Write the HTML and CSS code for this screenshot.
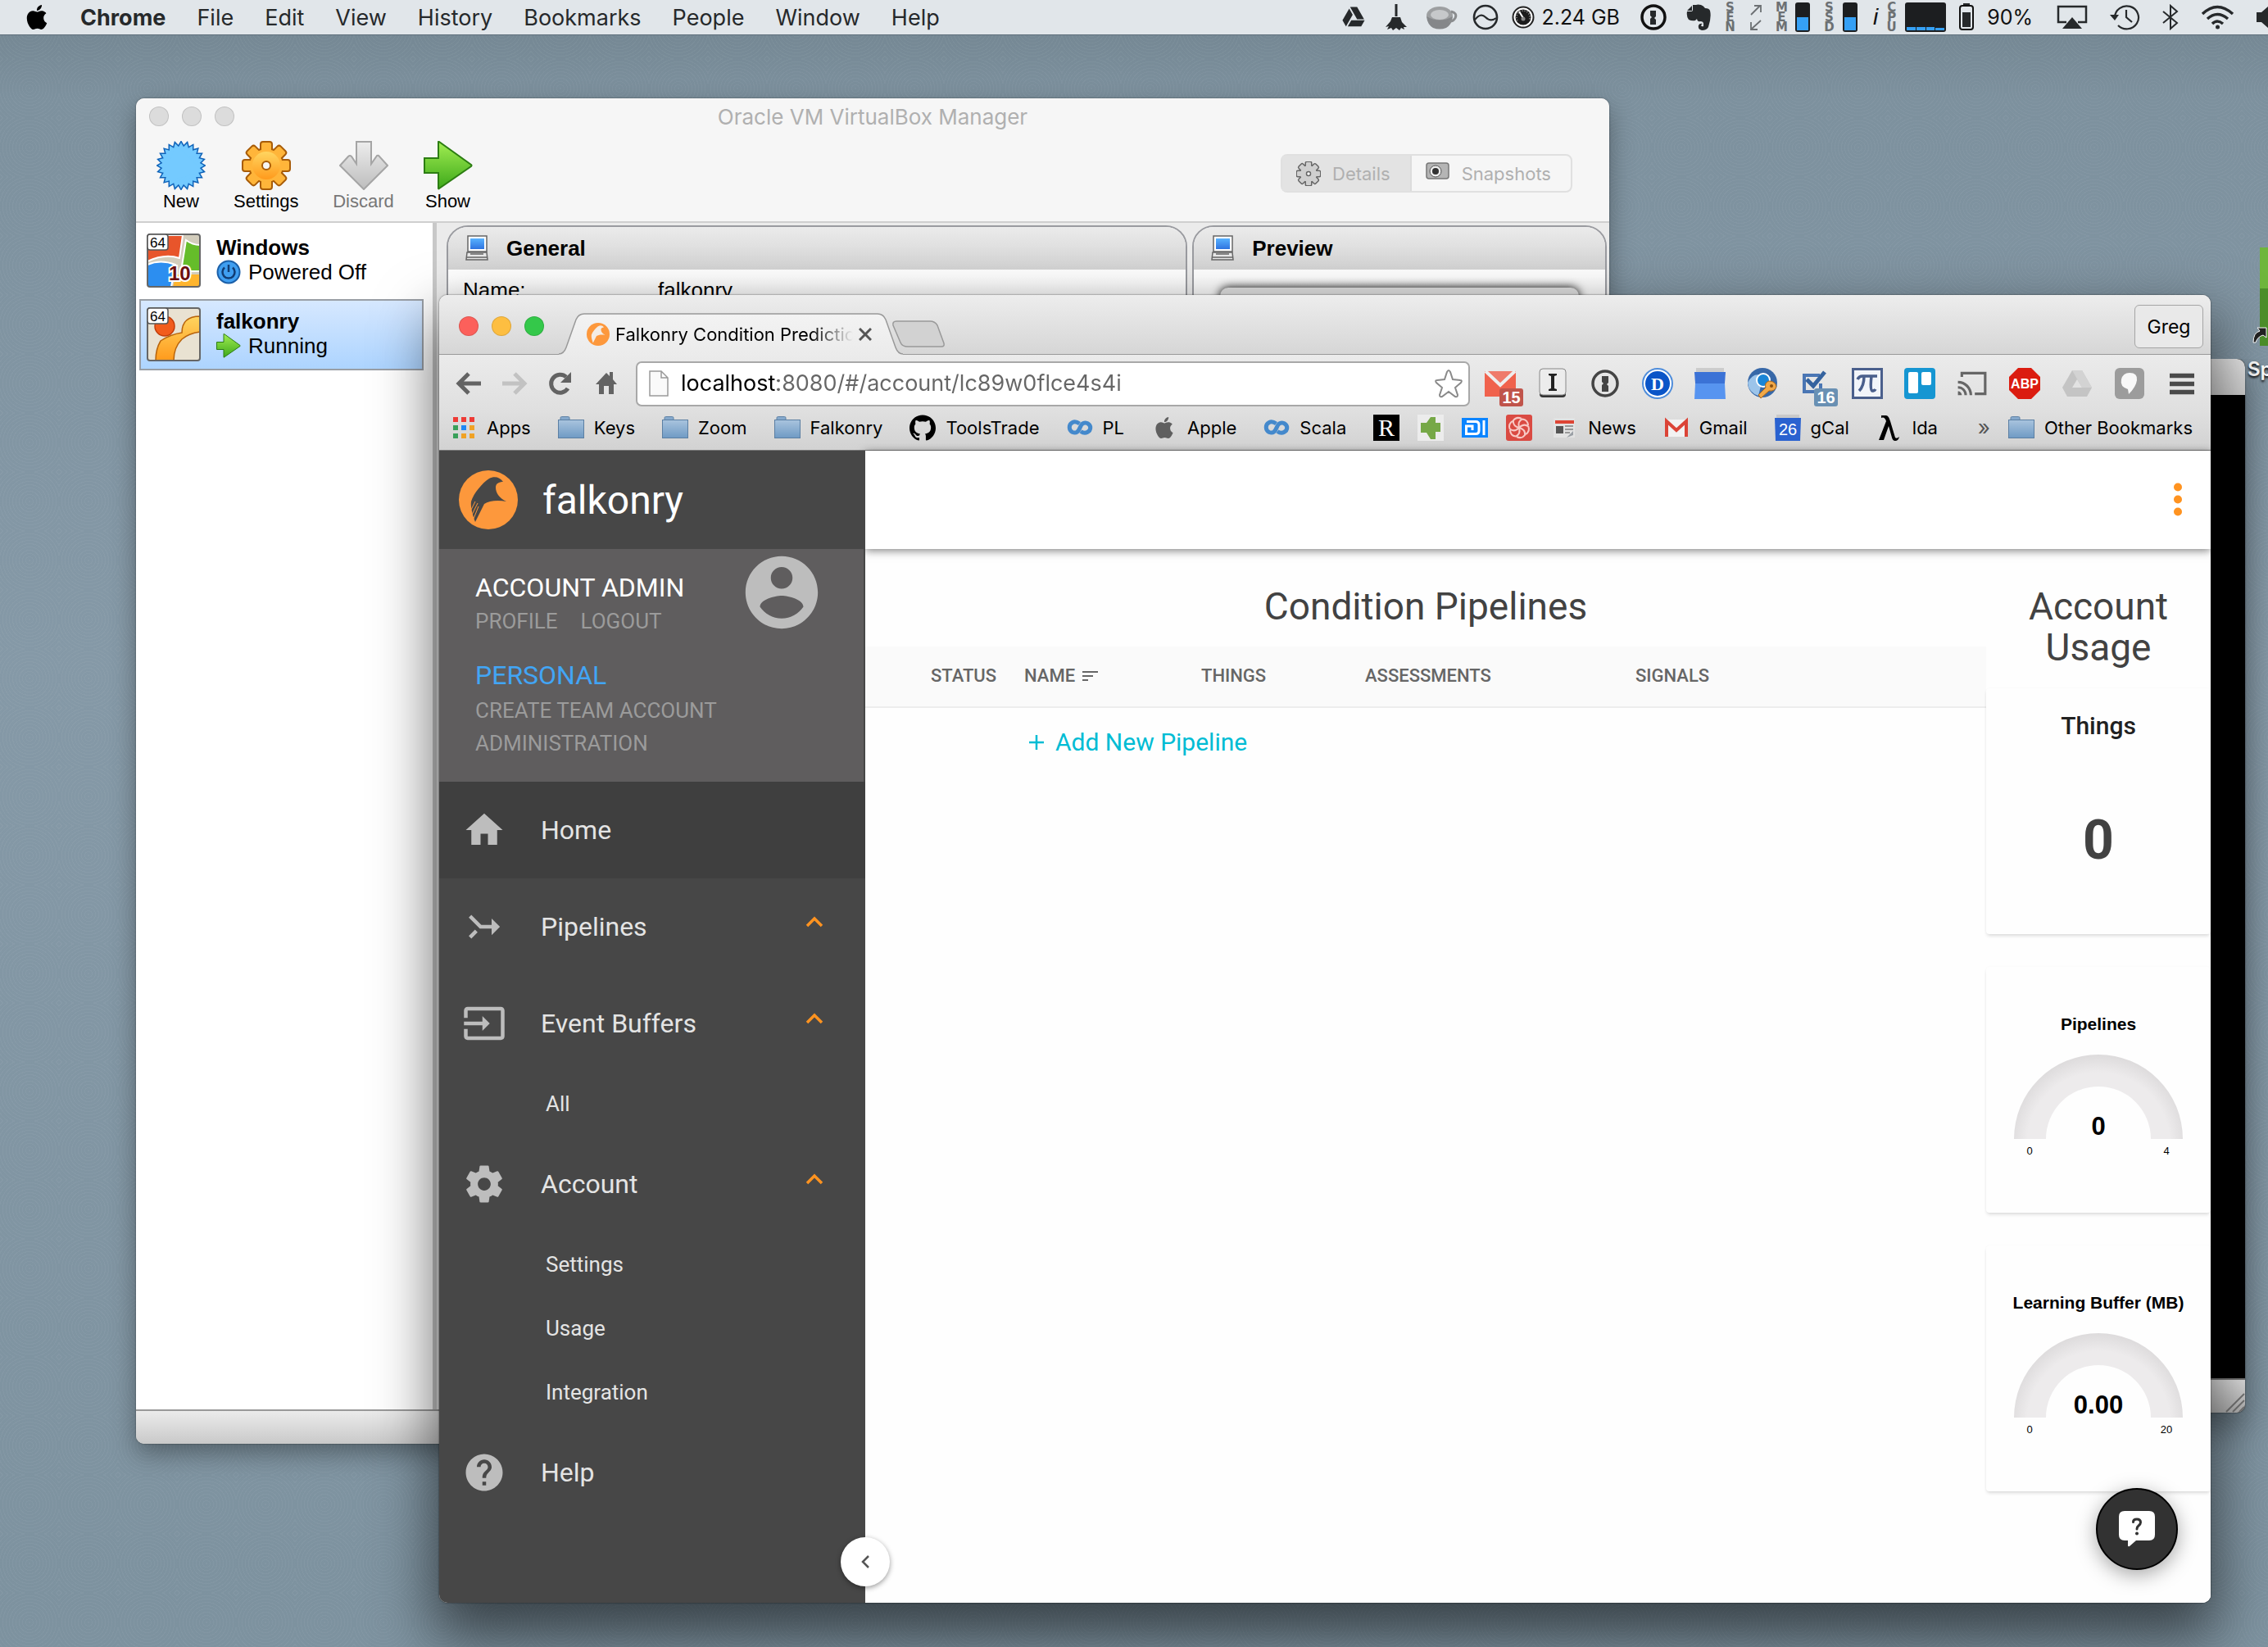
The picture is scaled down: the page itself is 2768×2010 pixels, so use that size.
FILE: index.html
```html
<!DOCTYPE html>
<html lang="en">
<head>
<meta charset="utf-8">
<meta name="viewport" content="width=device-width, initial-scale=1">
<title>Falkonry Condition Prediction</title>
<link rel="stylesheet" href="styles.css">
</head>
<body>
<svg class="defs" aria-hidden="true">
  <defs>
    <linearGradient id="g-orange" x1="0" y1="0" x2="0" y2="1"><stop offset="0" stop-color="#ffd560"/><stop offset="1" stop-color="#ff9a1c"/></linearGradient>
    <linearGradient id="g-green" x1="0" y1="0" x2="0" y2="1"><stop offset="0" stop-color="#a2ee52"/><stop offset="1" stop-color="#3da81a"/></linearGradient>
    <linearGradient id="g-grey" x1="0" y1="0" x2="0" y2="1"><stop offset="0" stop-color="#ededed"/><stop offset="1" stop-color="#bdbdbd"/></linearGradient>
    <linearGradient id="g-steel" x1="0" y1="0" x2="0" y2="1"><stop offset="0" stop-color="#a9c4de"/><stop offset="1" stop-color="#6f9ac4"/></linearGradient>
    <linearGradient id="g-screen" x1="0" y1="0" x2="0" y2="1"><stop offset="0" stop-color="#58b2ff"/><stop offset="1" stop-color="#2f74e0"/></linearGradient>
    <linearGradient id="g-tab" x1="0" y1="0" x2="0" y2="1"><stop offset="0" stop-color="#f3f3f3"/><stop offset="1" stop-color="#ebebeb"/></linearGradient>
    <radialGradient id="g-gauge" gradientUnits="userSpaceOnUse" cx="103" cy="109" r="109"><stop offset="0.8" stop-color="#edebec"/><stop offset="1" stop-color="#dddbdc"/></radialGradient>
  </defs>
  <symbol id="apple" viewBox="0 0 24 24"><path d="M12.152 6.896c-.948 0-2.415-1.078-3.96-1.04-2.04.027-3.91 1.183-4.961 3.014-2.117 3.675-.546 9.103 1.519 12.09 1.013 1.454 2.208 3.09 3.792 3.039 1.52-.065 2.09-.987 3.935-.987 1.831 0 2.35.987 3.96.948 1.637-.026 2.676-1.48 3.676-2.948 1.156-1.688 1.636-3.325 1.662-3.415-.039-.013-3.182-1.221-3.22-4.857-.026-3.04 2.48-4.494 2.597-4.559-1.429-2.09-3.623-2.324-4.39-2.376-2-.156-3.675 1.09-4.61 1.09zM15.53 3.83c.843-1.012 1.4-2.427 1.245-3.83-1.207.052-2.662.805-3.532 1.818-.78.896-1.454 2.338-1.273 3.714 1.338.104 2.715-.688 3.559-1.701"/></symbol>
  <symbol id="folder" viewBox="0 0 32 32"><path d="M3 7V4q0-1.500 1.500-1.500h8q1.500 0 1.500 1.500v3" fill="#86a9cc" stroke="#5f83a6"/><rect x=".5" y="6.500" width="31" height="22" fill="url(#g-steel)" stroke="#5b7fa3"/></symbol>
  <symbol id="monitor" viewBox="0 0 28 32"><rect x="3" y="1" width="23" height="19" fill="#fff" stroke="#666" stroke-width="1.500"/><rect x="6" y="4" width="17" height="13" fill="url(#g-screen)"/><path d="M2 21h24l1 9H1z" fill="#e8e8e8" stroke="#666" stroke-width="1.500"/><path d="M6 23h16M2 27h24" stroke="#666" stroke-width="1.500"/></symbol>
  <symbol id="falcon" viewBox="0 0 72 72"><path d="M54 14C50 8 43 7 37 10C29 15 18 28 15 38C14 45 17 55 20 63L31 41C37 37 47 36 58 38C50 34 45 28 45 21C45 16 49 14 54 14Z"/></symbol>
  <symbol id="go" viewBox="0 0 60 60"><path d="M1 21H18V1.500Q18 0 19 1L58 29Q59 30 58 31L19 58Q18 59 18 57.500V39H1z" fill="url(#g-green)" stroke="#2c7d12" stroke-width="2"/></symbol>
  <symbol id="coursera" viewBox="0 0 32 32"><path d="M15.500 11C12 8.500 9 8.500 7 9.500C2 12 2 19 7 21.500C12 23.500 14.500 20 16 16C17.500 12 20 8.500 25 10.500C30 13 30 19 25 21.500C23 22.500 20 22.500 17 20.500" fill="none" stroke="#4489cc" stroke-width="5"/></symbol>
  <symbol id="chevron-up" viewBox="0 0 24 16"><path d="M3 13l9-9 9 9" fill="none" stroke="#ff9320" stroke-width="3.500"/></symbol>
  <symbol id="gear8" viewBox="0 0 60 60"><g><rect x="24" y="2" width="12" height="56" rx="2"/><rect x="24" y="2" width="12" height="56" rx="2" transform="rotate(45 30 30)"/><rect x="24" y="2" width="12" height="56" rx="2" transform="rotate(90 30 30)"/><rect x="24" y="2" width="12" height="56" rx="2" transform="rotate(135 30 30)"/><circle cx="30" cy="30" r="20"/></g></symbol>
  <symbol id="burst" viewBox="0 0 60 60"><path id="spike" d="M30 2L54.200 44H5.800z"/><use href="#spike" transform="rotate(15 30 30)"/><use href="#spike" transform="rotate(30 30 30)"/><use href="#spike" transform="rotate(45 30 30)"/><use href="#spike" transform="rotate(60 30 30)"/><use href="#spike" transform="rotate(75 30 30)"/><use href="#spike" transform="rotate(90 30 30)"/><use href="#spike" transform="rotate(105 30 30)"/></symbol>
</svg>

<div class="desktop">
  <header class="menubar">
    <nav class="menus">
      <button class="menu menu-apple" aria-label="Apple"><svg width="30" height="30"><use href="#apple"/></svg></button>
      <button class="menu menu-app">Chrome</button>
      <button class="menu">File</button>
      <button class="menu">Edit</button>
      <button class="menu">View</button>
      <button class="menu">History</button>
      <button class="menu">Bookmarks</button>
      <button class="menu">People</button>
      <button class="menu">Window</button>
      <button class="menu">Help</button>
    </nav>
    <div class="extras">
      <svg width="38" height="30" viewBox="0 0 24 24"><path d="M7.710 3.500L1.150 15l3.430 6 6.550-11.500zM9.730 15L6.300 21h13.120l3.430-6zM22.280 14L15.420 2H8.580l6.840 12z"/></svg>
      <svg width="36" height="34" viewBox="0 0 36 34"><path d="M16.500 1h3v15h-3zM13 17h10l2 6 6 6-4 0 1 3-4-2-2 3-4-3-4 3-2-3-5 2 2-4-4 1 6-7z"/></svg>
      <svg width="44" height="30" viewBox="0 0 44 30"><ellipse cx="20" cy="13" rx="16" ry="11" fill="#9d9fa1"/><path d="M4 14q16 9 32 0-1 10-8 14-8 3-16 0Q5 24 4 14z" fill="#85878a"/><ellipse cx="20" cy="12" rx="11" ry="6" fill="#c6c8ca"/><path d="M34 8q8 2 5 8-3 5-8 4" fill="none" stroke="#8a8c8e" stroke-width="3"/></svg>
      <svg width="34" height="34" viewBox="0 0 34 34"><circle cx="17" cy="17" r="14" fill="none" stroke="#26292b" stroke-width="2.600"/><path d="M4 20C9 14 13 13 17 17s8 5 13 1" fill="none" stroke="#26292b" stroke-width="2.200"/></svg>
      <span class="meter">
        <svg width="28" height="30" viewBox="0 0 28 30"><circle cx="14" cy="15" r="12.500" fill="#fff" stroke="#222" stroke-width="2"/><circle cx="14" cy="15" r="9.500" fill="#1c1c1c"/><path d="M14 16L9 8" stroke="#fff" stroke-width="2"/><path d="M7 19A8 8 0 1 1 21 19" fill="none" stroke="#aaa" stroke-width="1.500" stroke-dasharray="1 2"/><circle cx="14" cy="17" r="2.500" fill="#888"/></svg>
        2.24 GB
      </span>
      <svg width="51" height="34" viewBox="0 0 51 34"><circle cx="26" cy="17" r="14" fill="none" stroke="#111" stroke-width="3.500"/><path d="M22 9h7v7l-2 2 2 2v6h-7v-7l2-2-2-2z"/></svg>
      <svg width="30" height="32" viewBox="0 0 30 32"><path d="M8 1v6q0 2-2 2H1q-1 6 2 10 4 2 8 1l2-2q1 4 4 3 4 0 4 3v3q-2 1-3-1 1-2 2-2-4-1-5 2-1 5 4 6 6 0 8-4 4-12 2-20-1-3-6-3-2-3-5-4-4-1-6 0zM7 2L1 8h6z"/></svg>
      <span class="stack">S<br>E<br>N</span>
      <svg width="16" height="32" viewBox="0 0 16 32" fill="none" stroke="#6c7073" stroke-width="1.800"><path d="M2 13L13 2M6 2h8v8M14 20L3 30M2 22v9h8"/></svg>
      <span class="meter"><span class="stack">M<br>E<br>M</span><span class="bar"><span style="height:50%"></span></span></span>
      <span class="meter"><span class="stack">S<br>S<br>D</span><span class="bar"><span style="height:50%"></span></span></span>
      <span class="meter meter-cpu"><i class="info">i</i><span class="stack">C<br>P<br>U</span><span class="bar bar-wide"><span style="height:14%"></span><span style="height:14%"></span><span style="height:14%"></span><span style="height:8%"></span></span></span>
      <svg width="20" height="34" viewBox="0 0 20 34"><rect x="6" y="0" width="8" height="3"/><rect x="2" y="3" width="16" height="29" rx="3" fill="none" stroke="#111" stroke-width="2"/><rect x="5" y="11" width="10" height="18"/></svg>
      <span>90%</span>
      <span class="radios">
        <svg width="38" height="30" viewBox="0 0 38 30"><path d="M12 21H2V2h34v19H26" fill="none" stroke="#26292b" stroke-width="2.500"/><path d="M19 15l12 14H7z"/></svg>
        <svg width="37" height="32" viewBox="0 0 37 32" fill="none" stroke="#26292b" stroke-width="2.200"><path d="M6 16A14.500 14 0 1 1 10 26M20 7v9l7 6"/><path d="M0 13h11l-5 7z" fill="#26292b" stroke="none"/></svg>
        <svg width="20" height="32" viewBox="0 0 20 32" fill="none" stroke="#26292b" stroke-width="2"><path d="M1 9l17 14-8 7V2l8 7L1 23"/></svg>
        <svg width="41" height="30" viewBox="0 0 41 30" fill="none" stroke="#26292b" stroke-width="3.500"><path d="M2 11Q20-6 39 11M8 17q12-11 25 0M14 23q6-6 13 0"/><circle cx="20.500" cy="27" r="2.500" fill="#26292b" stroke="none"/></svg>
        <svg width="14" height="30" viewBox="0 0 14 30"><path d="M0 9h6l8-7v26l-8-7H0z"/></svg>
      </span>
    </div>
  </header>

  <div class="shortcut">
    <svg width="30" height="124" viewBox="0 0 30 124"><rect x="10" y="0" width="20" height="120" fill="#4c8f2a"/><rect x="10" y="0" width="20" height="50" fill="#6fb63c"/><path d="M2 116q0-12 8-14l-3-4h11v12l-4-3q-7 2-9 9z" fill="#222" stroke="#fff"/></svg>
    <span>Sp</span>
  </div>

  <section class="window vbox">
    <header class="vbox-head">
      <div class="lights lights-off"><span></span><span></span><span></span></div>
      <h1 class="vbox-title">Oracle VM VirtualBox Manager</h1>
      <div class="vbox-tools">
        <button class="tool"><svg width="60" height="60"><use href="#burst" fill="none" stroke="#0f62b8" stroke-width="3"/><use href="#burst" fill="#74caff"/></svg>New</button>
        <button class="tool"><svg width="60" height="60" viewBox="0 0 60 60"><use href="#gear8" fill="none" stroke="#a85c08" stroke-width="4"/><use href="#gear8" fill="#ffb53a"/><circle cx="30" cy="30" r="17" fill="url(#g-orange)"/><circle cx="30" cy="30" r="5" fill="#f6f6f6" stroke="#a85c08" stroke-width="2"/></svg>Settings</button>
        <button class="tool tool-off"><svg width="60" height="60" viewBox="0 0 60 60"><path d="M21 1H39V28L46 18Q48 17 49 19L59 30 30 59 1 30 11 19Q13 17 15 19L21 28z" fill="url(#g-grey)" stroke="#a5a5a5" stroke-width="2"/></svg>Discard</button>
        <button class="tool"><svg width="60" height="60"><use href="#go"/></svg>Show</button>
        <div class="segments">
          <button class="segment segment-on"><svg width="30" height="30" viewBox="0 0 60 60"><use href="#gear8" fill="none" stroke="#666" stroke-width="6"/><use href="#gear8" fill="#cfcfcf"/><circle cx="30" cy="30" r="5" fill="#fff" stroke="#666" stroke-width="3"/></svg>Details</button>
          <button class="segment"><svg width="30" height="30" viewBox="0 0 30 30"><rect x="1" y="2" width="27" height="19" rx="3" fill="#b5b5b5" stroke="#777" stroke-width="1.500"/><circle cx="12" cy="12" r="7" fill="#eee" stroke="#555"/><circle cx="12" cy="12" r="4" fill="#333"/></svg>Snapshots</button>
        </div>
      </div>
    </header>
    <div class="vbox-body">
      <ul class="machines">
        <li class="machine">
          <svg width="66" height="66" viewBox="0 0 66 66"><rect x="1" y="1" width="64" height="64" rx="3" fill="#d3cdbc"/><path d="M24 2h20L40 30Q22 24 1 34V18z" fill="#e8552b" stroke="#fff" stroke-width="2"/><path d="M48 8q8 6 17 6v32H42z" fill="#65bd2a" stroke="#fff" stroke-width="2"/><path d="M1 38q16-7 34 0L30 65H1z" fill="#2c8ef0" stroke="#fff" stroke-width="2"/><path d="M36 50h29v15H32z" fill="#ffb52e"/><rect x="1" y="1" width="64" height="64" rx="3" fill="none" stroke="#666" stroke-width="2"/><rect x="1" y="1" width="25" height="19" rx="3" fill="#fff" stroke="#555" stroke-width="1.500"/><text class="bits" x="4" y="17">64</text><text class="version" x="27" y="57">10</text></svg>
          <div><b>Windows</b><span class="state"><svg width="30" height="30" viewBox="0 0 30 30"><circle cx="15" cy="15" r="13.500" fill="#3f9ef0" stroke="#1a5fa8" stroke-width="2"/><path d="M15 6v9M10 9.500a7.500 7.500 0 1 0 10 0" fill="none" stroke="#113c73" stroke-width="2.500"/></svg>Powered Off</span></div>
        </li>
        <li class="machine machine-on">
          <svg width="66" height="66" viewBox="0 0 66 66"><rect x="1" y="1" width="64" height="64" rx="3" fill="#e9e2d2"/><circle cx="22" cy="23" r="12" fill="#f25c1c" stroke="#c33d0a" stroke-width="1.500"/><path d="M65 11q-22 0-22 20-14 2-26 10-6 10-6 24h22q0-16 10-26 8-7 22-9z" fill="url(#g-orange)" stroke="#b8640c" stroke-width="1.500"/><rect x="1" y="1" width="64" height="64" rx="3" fill="none" stroke="#666" stroke-width="2"/><rect x="1" y="1" width="25" height="19" rx="3" fill="#fff" stroke="#555" stroke-width="1.500"/><text class="bits" x="4" y="17">64</text></svg>
          <div><b>falkonry</b><span class="state"><svg width="30" height="30"><use href="#go"/></svg>Running</span></div>
        </li>
      </ul>
      <div class="panels">
        <section class="panel panel-wide">
          <h2><svg width="28" height="32"><use href="#monitor"/></svg>General</h2>
          <dl><dt>Name:</dt><dd>falkonry</dd></dl>
        </section>
        <section class="panel">
          <h2><svg width="28" height="32"><use href="#monitor"/></svg>Preview</h2>
          <div class="preview"></div>
        </section>
      </div>
    </div>
    <footer class="vbox-status"></footer>
  </section>

  <section class="window console">
    <header class="console-head"></header>
    <div class="console-screen"></div>
    <footer class="console-foot"><svg width="24" height="24" viewBox="0 0 24 24"><path d="M1 23L23 1M9 23L23 9M17 23l6-6" stroke="#777" stroke-width="2"/></svg></footer>
  </section>

  <section class="window chrome">
    <header class="tabstrip">
      <div class="lights"><span class="red"></span><span class="amber"></span><span class="green"></span></div>
      <div class="tab">
        <svg class="tab-shape" width="420" height="52" viewBox="0 0 420 52"><path d="M0 50Q6 50 9 42L21 8Q24 1 31 1H389Q396 1 399 8L411 42Q414 50 420 50V52H0z" fill="url(#g-tab)"/><path d="M0 50Q6 50 9 42L21 8Q24 1 31 1H389Q396 1 399 8L411 42Q414 50 420 50" fill="none" stroke="#999" stroke-width="1.500"/></svg>
        <svg class="favicon" width="28" height="28" viewBox="0 0 72 72"><circle cx="36" cy="36" r="36" fill="#fd983c"/><use href="#falcon" fill="#f4ece4"/></svg>
        <span class="tab-title">Falkonry Condition Prediction</span>
        <button class="tab-close" aria-label="Close tab"><svg width="16" height="16" viewBox="0 0 16 16"><path d="M1 1l14 14M15 1L1 15" stroke="#555" stroke-width="3"/></svg></button>
      </div>
      <button class="newtab" aria-label="New tab"><svg width="66" height="34" viewBox="0 0 66 34"><path d="M6 1H47Q53 1 56 6L64 28Q65 32 61 32H20Q13 32 11 27L2 6Q1 1 6 1z" fill="#d2d2d2" stroke="#999" stroke-width="1.500"/></svg></button>
      <button class="profile">Greg</button>
    </header>
    <div class="toolbar">
      <nav class="nav-buttons">
        <button aria-label="Back"><svg width="32" height="32" viewBox="0 0 32 32"><path d="M16 4L4 16l12 12M4 16h27" fill="none" stroke="#636363" stroke-width="5"/></svg></button>
        <button aria-label="Forward" disabled><svg width="32" height="32" viewBox="0 0 32 32"><path d="M16 4l12 12-12 12M28 16H1" fill="none" stroke="#c2c2c2" stroke-width="5"/></svg></button>
        <button aria-label="Reload"><svg width="32" height="32" viewBox="0 0 32 32"><path d="M25 22A11 11 0 1 1 23 8" fill="none" stroke="#636363" stroke-width="5"/><path d="M29 2v13H16z" fill="#636363"/></svg></button>
        <button aria-label="Home"><svg width="32" height="32" viewBox="0 0 32 32"><path d="M16 3l4 4V2h4v9l5 6h-4v12h-6V19h-6v10H7V17H3z" fill="#636363"/></svg></button>
      </nav>
      <div class="omnibox">
        <svg width="24" height="32" viewBox="0 0 24 32"><path d="M1 1h14l8 8v22H1zM15 1v8h8" fill="#fafafa" stroke="#9a9a9a" stroke-width="1.500"/></svg>
        <input class="url" type="text" aria-label="Address" value="localhost:8080/#/account/lc89w0flce4s4i">
        <button aria-label="Bookmark this page"><svg width="36" height="36" viewBox="0 0 36 36"><path d="M18 2q1 0 2 2l3 9 9 1q3 0 1 3l-7 6 3 9q0 3-3 2l-8-6-8 6q-3 1-3-2l3-9-7-6q-2-3 1-3l9-1 3-9q1-2 2-2z" fill="#fff" stroke="#8a8a8a" stroke-width="2"/></svg></button>
      </div>
      <div class="extensions">
        <button aria-label="Gmail"><svg width="38" height="38" viewBox="0 0 38 38"><path d="M0 5h38v30H0z" fill="#f0624d"/><path d="M0 5l19 17L38 5v-1H0z" fill="#ef7a6a"/><path d="M1 4l18 17L37 4" fill="none" stroke="#eee" stroke-width="4"/></svg><span class="badge badge-red">15</span></button>
        <button aria-label="Instapaper"><svg width="38" height="38" viewBox="0 0 38 38"><rect x="3" y="2" width="32" height="34" rx="4" fill="#333"/><rect x="3" y="1" width="32" height="32" rx="4" fill="#ececec" stroke="#888"/><path d="M14 7h10v2l-3 1v15l3 1v2H14v-2l3-1V10l-3-1z" fill="#222"/></svg></button>
        <button aria-label="1Password"><svg width="38" height="38" viewBox="0 0 38 38"><circle cx="19" cy="19" r="15" fill="none" stroke="#444" stroke-width="3.500"/><path d="M15 10h8v8l-2 2 2 2v7h-8v-8l2-2-2-2z" fill="#444"/></svg></button>
        <button aria-label="Disconnect"><svg width="38" height="38" viewBox="0 0 38 38"><circle cx="19" cy="19" r="18" fill="#fff" stroke="#4f8ddb" stroke-width="2"/><circle cx="19" cy="19" r="15" fill="#0a55c8"/><text class="letter-d" x="19" y="27">D</text></svg></button>
        <button aria-label="Calendar"><svg width="38" height="38" viewBox="0 0 38 38"><rect x="2" y="0" width="34" height="6" fill="#ccc"/><path d="M0 5h38l-1 14H1z" fill="#3b72d6"/><path d="M1 19h36l1 19H0z" fill="#5794f0"/></svg></button>
        <button aria-label="Account keys"><svg width="38" height="38" viewBox="0 0 38 38"><circle cx="19" cy="18" r="18" fill="#3768a8"/><path d="M1 18Q8 4 20 10L14 34Q2 30 1 18z" fill="#9cc4ea"/><circle cx="20" cy="15" r="8" fill="#1a85d6" stroke="#fff" stroke-width="2"/><path d="M14 33l9-9q-2-6 4-8 8 0 9 7-2 6-9 5L17 37z" fill="#f0a848" stroke="#a8661c"/><circle cx="30" cy="22" r="2" fill="#8a5010"/></svg></button>
        <button aria-label="Tasks"><svg width="38" height="38" viewBox="0 0 38 38"><path d="M25 9H6v20h20V19" fill="none" stroke="#4a76b4" stroke-width="4"/><path d="M9 14l8 8L31 5" fill="none" stroke="#35639f" stroke-width="5"/></svg><span class="badge badge-blue">16</span></button>
        <button aria-label="Math"><svg width="38" height="38" viewBox="0 0 38 38"><rect x="1.500" y="1.500" width="35" height="35" fill="#f2f5fa" stroke="#4a5f8c" stroke-width="3"/><path d="M7 14q2-4 6-4h18M15 10q0 12-6 18M24 10q-2 17 1 18 3 0 4-2" fill="none" stroke="#4a5f8c" stroke-width="3.500"/></svg></button>
        <button aria-label="Trello"><svg width="38" height="38" viewBox="0 0 38 38"><rect width="38" height="38" rx="4" fill="#1696d2"/><rect x="5" y="5" width="12" height="26" rx="2" fill="#fff"/><rect x="21" y="5" width="12" height="16" rx="2" fill="#fff"/></svg></button>
        <button aria-label="Cast"><svg width="42" height="38" viewBox="0 0 24 24"><path d="M21 3H3v4h2V5h16v14h-7v2h9V3zM1 18v3h3c0-1.660-1.340-3-3-3zm0-4v2c2.760 0 5 2.240 5 5h2c0-3.870-3.130-7-7-7zm0-4v2c4.970 0 9 4.030 9 9h2c0-6.080-4.930-11-11-11z" fill="#666"/></svg></button>
        <button aria-label="Adblock Plus"><svg width="38" height="38" viewBox="0 0 38 38"><path d="M11 0h16l11 11v16L27 38H11L0 27V11z" fill="#db1c10"/><text class="abp" x="19" y="25">ABP</text></svg></button>
        <button aria-label="Drive"><svg width="38" height="38" viewBox="0 0 38 38"><path d="M13 3h12l12 21-6 11H7L1 24z" fill="#c4c4c4"/><path d="M13 3h12l12 21H25z" fill="#d3d3d3"/><path d="M19 14l6 10H13z" fill="#e2e2e2"/></svg></button>
        <button aria-label="Balloon"><svg width="38" height="38" viewBox="0 0 38 38"><rect x="1" width="36" height="38" rx="6" fill="#9c9c9c"/><path d="M19 6q10 0 9 9-1 8-10 17l-1-6q-10-3-8-12 2-8 10-8z" fill="#f8f8f8"/></svg></button>
        <button aria-label="Menu"><svg width="38" height="38" viewBox="0 0 38 38"><path d="M4 9.500h30M4 19.500h30M4 29.500h30" stroke="#4a4a4a" stroke-width="5.500"/></svg></button>
      </div>
    </div>
    <nav class="bookmarks">
      <a href="#apps"><svg width="32" height="32" viewBox="0 0 32 32"><path d="M3 3h6v6H3zM13 3h6v6h-6zM23 3h6v6h-6z" fill="#ee3b35"/><path d="M3 13h6v6H3zM3 23h6v6H3z" fill="#39a05a"/><path d="M13 13h6v6h-6z" fill="#1e88f5"/><path d="M23 13h6v6h-6zM13 23h6v6h-6zM23 23h6v6h-6z" fill="#f0a225"/></svg>Apps</a>
      <a href="#keys"><svg width="32" height="32"><use href="#folder"/></svg>Keys</a>
      <a href="#zoom"><svg width="32" height="32"><use href="#folder"/></svg>Zoom</a>
      <a href="#falkonry"><svg width="32" height="32"><use href="#folder"/></svg>Falkonry</a>
      <a href="#toolstrade"><svg width="32" height="32" viewBox="0 0 24 24"><path d="M12 .297c-6.630 0-12 5.373-12 12 0 5.303 3.438 9.800 8.205 11.385.6.113.82-.258.82-.577 0-.285-.01-1.040-.015-2.040-3.338.724-4.042-1.610-4.042-1.610C4.422 18.070 3.633 17.700 3.633 17.700c-1.087-.744.084-.729.084-.729 1.205.084 1.838 1.236 1.838 1.236 1.070 1.835 2.809 1.305 3.495.998.108-.776.417-1.305.76-1.605-2.665-.3-5.466-1.332-5.466-5.930 0-1.310.465-2.380 1.235-3.220-.135-.303-.54-1.523.105-3.176 0 0 1.005-.322 3.300 1.230.96-.267 1.980-.399 3-.405 1.020.006 2.040.138 3 .405 2.280-1.552 3.285-1.230 3.285-1.230.645 1.653.24 2.873.12 3.176.765.84 1.230 1.910 1.230 3.220 0 4.610-2.805 5.625-5.475 5.920.42.36.81 1.096.81 2.220 0 1.606-.015 2.896-.015 3.286 0 .315.21.69.825.57C20.565 22.092 24 17.592 24 12.297c0-6.627-5.373-12-12-12"/></svg>ToolsTrade</a>
      <a href="#pl"><svg width="32" height="32"><use href="#coursera"/></svg>PL</a>
      <a href="#apple-site"><svg width="32" height="26" fill="#5f5f5f"><use href="#apple"/></svg>Apple</a>
      <a href="#scala"><svg width="32" height="32"><use href="#coursera"/></svg>Scala</a>
      <span class="icon-links">
        <a href="#r" aria-label="R"><svg width="32" height="32" viewBox="0 0 32 32"><rect width="32" height="32"/><text class="letter-r" x="16" y="26">R</text></svg></a>
        <a href="#horn" aria-label="Horn"><svg width="32" height="32" viewBox="0 0 32 32"><rect width="32" height="32" fill="#ececec"/><path d="M4 10h7l5-7h6v7h6v11h-6v9h-6l-5-8H4z" fill="#76a847"/></svg></a>
        <a href="#di" aria-label="DI"><svg width="32" height="32" viewBox="0 0 32 32"><rect y="4" width="32" height="24" fill="#0a84ff"/><path d="M6 8.500h11q4 0 4 4v7q0 4-4 4H5.500V14H13v5M27 7v18" fill="none" stroke="#fff" stroke-width="3"/></svg></a>
        <a href="#swirl" aria-label="Swirl"><svg width="32" height="32" viewBox="0 0 32 32"><rect width="32" height="32" rx="3" fill="#da4a42"/><g fill="none" stroke="#f8c9c5" stroke-width="2"><path d="M16 16Q8 14 9 7q4-5 10-2"/><path d="M16 16Q8 14 9 7q4-5 10-2" transform="rotate(60 16 16)"/><path d="M16 16Q8 14 9 7q4-5 10-2" transform="rotate(120 16 16)"/><path d="M16 16Q8 14 9 7q4-5 10-2" transform="rotate(180 16 16)"/><path d="M16 16Q8 14 9 7q4-5 10-2" transform="rotate(240 16 16)"/><path d="M16 16Q8 14 9 7q4-5 10-2" transform="rotate(300 16 16)"/></g></svg></a>
      </span>
      <a href="#news"><svg width="32" height="32" viewBox="0 0 32 32"><path d="M2 4h26v24H2z" fill="#e2e2e2"/><path d="M4 7h23v4H4z" fill="#dd4535"/><rect x="5" y="14" width="9" height="9" fill="#555"/><path d="M16 14h10M16 18h10M16 22h6" stroke="#999" stroke-width="2"/><path d="M18 28l8-8v5z" fill="#9a9fa5"/></svg>News</a>
      <a href="#gmail"><svg width="32" height="32" viewBox="0 0 32 32"><path d="M2 6h28v21H2z" fill="#f2f2f2"/><path d="M4 27V8l12 11L28 8v19" fill="none" stroke="#db4437" stroke-width="4"/></svg>Gmail</a>
      <a href="#gcal"><svg width="32" height="32" viewBox="0 0 32 32"><rect x="2" width="28" height="6" fill="#c9c9c9"/><path d="M0 4h32l-1 28H1z" fill="#2a62d0"/><text class="cal-day" x="16" y="25">26</text></svg>gCal</a>
      <a href="#lda"><svg width="32" height="32" viewBox="0 0 32 32"><path d="M6 1h6q3 0 5 7l6 20q2 2 5-1-1 5-5 5-3 0-4-4l-4-14-6 17H3l9-23q-2-6-6-4z"/></svg>lda</a>
      <span class="bookmarks-end"><button class="more" aria-label="More bookmarks">»</button>
      <a href="#other"><svg width="32" height="32"><use href="#folder"/></svg>Other Bookmarks</a></span>
    </nav>

    <div class="app">
      <aside class="sidebar">
        <header class="brand">
          <svg width="72" height="72" viewBox="0 0 72 72"><circle cx="36" cy="36" r="36" fill="#fd983c"/><use href="#falcon" fill="#474747"/><path d="M14 50l6-12M16 54l7-14M18 59l6-15" stroke="#fd983c"/></svg>
          <span>falkonry</span>
        </header>
        <section class="account">
          <div>
            <p class="who">ACCOUNT ADMIN</p>
            <p class="links"><a href="#profile">PROFILE</a><a href="#logout">LOGOUT</a></p>
            <a class="personal" href="#personal">PERSONAL</a>
            <a href="#create-team">CREATE TEAM ACCOUNT</a>
            <a href="#administration">ADMINISTRATION</a>
          </div>
          <svg class="avatar" width="106" height="106" viewBox="0 0 24 24"><path d="M12 2C6.480 2 2 6.480 2 12s4.480 10 10 10 10-4.480 10-10S17.520 2 12 2zm0 3c1.660 0 3 1.340 3 3s-1.340 3-3 3-3-1.340-3-3 1.340-3 3-3zm0 14.200c-2.500 0-4.710-1.280-6-3.220.03-1.990 4-3.080 6-3.080 1.990 0 5.970 1.090 6 3.080-1.290 1.940-3.500 3.220-6 3.220z"/></svg>
        </section>
        <nav class="side-nav">
          <a class="item item-on" href="#home"><svg width="54" height="54" viewBox="0 0 24 24"><path d="M10 20v-6h4v6h5v-8h3L12 3 2 12h3v8z"/></svg>Home</a>
          <a class="item" href="#pipelines"><svg width="54" height="54" viewBox="0 0 24 24"><path transform="rotate(90 12 12)" d="M17 20.410L18.410 19 15 15.590 13.590 17 17 20.410zM7.500 8H11v5.590L5.590 19 7 20.410l6-6V8h3.500L12 3.500 7.500 8z"/></svg>Pipelines<svg class="chev" width="24" height="16"><use href="#chevron-up"/></svg></a>
          <a class="item" href="#buffers"><svg width="54" height="54" viewBox="0 0 24 24"><path d="M21 3.010H3c-1.100 0-2 .9-2 2V9h2V4.990h18v14.030H3V15H1v4.010c0 1.100.9 1.980 2 1.980h18c1.100 0 2-.88 2-1.980v-14c0-1.110-.9-2-2-2zM11 16l4-4-4-4v3H1v2h10v3z"/></svg>Event Buffers<svg class="chev" width="24" height="16"><use href="#chevron-up"/></svg></a>
          <a class="sub" href="#all">All</a>
          <a class="item" href="#account"><svg width="54" height="54" viewBox="0 0 24 24"><path d="M19.430 12.980c.04-.32.07-.64.07-.98s-.03-.66-.07-.98l2.110-1.650c.19-.15.24-.42.12-.64l-2-3.460c-.12-.22-.39-.3-.61-.22l-2.490 1c-.52-.4-1.080-.73-1.690-.98l-.38-2.650C14.460 2.180 14.250 2 14 2h-4c-.25 0-.46.18-.49.42l-.38 2.650c-.61.25-1.170.59-1.690.98l-2.490-1c-.23-.09-.49 0-.61.22l-2 3.460c-.13.22-.07.49.12.64l2.110 1.650c-.04.32-.07.65-.07.98s.03.66.07.98l-2.110 1.650c-.19.15-.24.42-.12.64l2 3.460c.12.22.39.3.61.22l2.490-1c.52.4 1.080.73 1.690.98l.38 2.650c.03.24.24.42.49.42h4c.25 0 .46-.18.49-.42l.38-2.650c.61-.25 1.170-.59 1.690-.98l2.490 1c.23.09.49 0 .61-.22l2-3.460c.12-.22.07-.49-.12-.64l-2.110-1.650zM12 15.500c-1.930 0-3.500-1.570-3.500-3.500s1.570-3.500 3.500-3.500 3.500 1.570 3.500 3.500-1.570 3.500-3.500 3.500z"/></svg>Account<svg class="chev" width="24" height="16"><use href="#chevron-up"/></svg></a>
          <a class="sub" href="#settings">Settings</a>
          <a class="sub" href="#usage">Usage</a>
          <a class="sub" href="#integration">Integration</a>
          <a class="item" href="#help"><svg width="54" height="54" viewBox="0 0 24 24"><path d="M12 2C6.480 2 2 6.480 2 12s4.480 10 10 10 10-4.480 10-10S17.520 2 12 2zm1 17h-2v-2h2v2zm2.070-7.750l-.9.92C13.450 12.900 13 13.500 13 15h-2v-.5c0-1.100.45-2.100 1.170-2.830l1.240-1.260c.37-.36.59-.86.59-1.410 0-1.100-.9-2-2-2s-2 .9-2 2H8c0-2.210 1.790-4 4-4s4 1.790 4 4c0 .88-.36 1.680-.93 2.250z"/></svg>Help</a>
        </nav>
        <button class="collapse" aria-label="Collapse sidebar"><svg width="16" height="20" viewBox="0 0 16 20"><path d="M12 3l-7 7 7 7" fill="none" stroke="#555" stroke-width="2.500"/></svg></button>
      </aside>

      <div class="main">
        <header class="app-bar">
          <button aria-label="More"><svg width="12" height="44" viewBox="0 0 12 44" fill="#ff9320"><circle cx="6" cy="6.500" r="5"/><circle cx="6" cy="21.500" r="5"/><circle cx="6" cy="36.500" r="5"/></svg></button>
        </header>
        <div class="content">
          <main class="pipelines">
            <h2 class="heading">Condition Pipelines</h2>
            <table>
              <colgroup><col class="c-status"><col class="c-name"><col class="c-things"><col class="c-assess"><col></colgroup>
              <thead><tr><th>STATUS</th><th>NAME <svg width="20" height="14" viewBox="0 0 20 14"><path d="M0 2h19M0 7h13M0 12h7" stroke="#666" stroke-width="2.200"/></svg></th><th>THINGS</th><th>ASSESSMENTS</th><th>SIGNALS</th></tr></thead>
              <tbody><tr><td></td><td colspan="4"><button class="add"><svg width="20" height="20" viewBox="0 0 20 20"><path d="M10 1v18M1 10h18" stroke="#00bcd4" stroke-width="2.500"/></svg>Add New Pipeline</button></td></tr></tbody>
            </table>
          </main>
          <aside class="usage">
            <h2 class="heading">Account Usage</h2>
            <section class="card"><h3>Things</h3><p class="count">0</p></section>
            <section class="card card-gauge"><h4>Pipelines</h4>
              <svg width="206" height="126" viewBox="0 0 206 126"><path d="M0 103A103 103 0 0 1 206 103H167A64 64 0 0 0 39 103z" fill="url(#g-gauge)"/><text class="value" x="103" y="98">0</text><text class="limit" x="19" y="122">0</text><text class="limit" x="186" y="122">4</text></svg>
            </section>
            <section class="card card-gauge"><h4>Learning Buffer (MB)</h4>
              <svg width="206" height="126" viewBox="0 0 206 126"><path d="M0 103A103 103 0 0 1 206 103H167A64 64 0 0 0 39 103z" fill="url(#g-gauge)"/><text class="value" x="103" y="98">0.00</text><text class="limit" x="19" y="122">0</text><text class="limit" x="186" y="122">20</text></svg>
            </section>
          </aside>
        </div>
        <button class="helper" aria-label="Get help"><svg width="44" height="44" viewBox="0 0 44 44"><path d="M7 0h30q7 0 7 7v22q0 7-7 7H21l-8 7q-2 1-2-1v-6H7q-7 0-7-7V7q0-7 7-7z" fill="#fff"/><path d="M17.500 13.500q0-3.500 4.500-3.500t4.500 4q0 2-2.500 4-2 1.500-2 4" fill="none" stroke="#323232" stroke-width="3" stroke-linecap="round"/><circle cx="22" cy="27.500" r="2" fill="#323232"/></svg></button>
      </div>
    </div>
  </section>
</div>
</body>
</html>
```

FILE: styles.css
```css
*, *::before, *::after { box-sizing: border-box; }

body {
  margin: 0;
  font-family: Inter, "Liberation Sans", sans-serif;
  color: #000;
}

h1, h2, h3, h4, p, ul, dl, dd { margin: 0; padding: 0; font-weight: 400; }
ul { list-style: none; }
a { color: inherit; text-decoration: none; }
svg { display: block; flex: none; }
button { margin: 0; padding: 0; border: 0; background: none; font: inherit; color: inherit; white-space: nowrap; }
.defs { position: absolute; width: 0; height: 0; }

.desktop {
  position: relative;
  min-height: 100vh;
  overflow: hidden;
  background:
    repeating-radial-gradient(circle at center, rgba(255, 255, 255, .04) 0 1px, rgba(0, 0, 0, 0) 1px 4px) 0 0 / 72px 72px,
    linear-gradient(#71838f, #7d919e 120px, #8599a7 40%, #7d929f);
}

/* Menu bar */
.menubar {
  display: flex;
  justify-content: space-between;
  height: 43px;
  background: #e1e6ea;
  border-bottom: 1px solid #5f6f7b;
  font-size: 26px;
  color: #26292b;
  overflow: hidden;
}
.menus { display: flex; align-items: center; gap: 38px; padding-left: 32px; font-size: 27px; }
.menu-apple { margin-left: -2px; }
.menu-app { font-weight: 700; }
.extras { display: flex; align-items: center; gap: 15px; font-size: 25px; fill: #26292b; white-space: nowrap; color: #111; }
.meter { display: flex; align-items: center; gap: 8px; }
.meter-cpu { padding-left: 4px; }
.stack { width: 17px; font: 700 15px/12px "DejaVu Sans", sans-serif; color: #6c7073; text-align: center; }
.info { font-family: "Liberation Sans", sans-serif; font-size: 28px; }
.bar { display: flex; align-items: flex-end; gap: 1px; width: 18px; height: 36px; padding: 2px; border-radius: 3px; background: #1c1e20; }
.bar span { flex: 1; background: #35a0f5; }
.bar-wide { width: 50px; }
.radios { display: flex; align-items: center; gap: 27px; padding-left: 14px; }

.shortcut { position: absolute; top: 302px; left: calc(100% - 20px); font-size: 24px; font-weight: 600; color: #fff; text-shadow: 0 2px 3px #000; }
.shortcut span { position: absolute; top: 134px; left: -5px; }

/* Windows */
.window { position: absolute; display: flex; flex-direction: column; border-radius: 10px; overflow: hidden; }
.lights { display: flex; gap: 16px; }
.lights span { width: 24px; height: 24px; border-radius: 50%; border: 1px solid rgba(0, 0, 0, .12); }
.lights-off span { background: #dcdcdc; }
.red { background: #fc605b; }
.amber { background: #fdbe41; }
.green { background: #34c84a; }

/* VirtualBox */
.vbox {
  inset: 120px 804px 248px 166px;
  background: #ebebeb;
  box-shadow: 0 0 2px rgba(0, 0, 0, .5), 0 12px 30px rgba(0, 0, 0, .35);
  font: 26px/30px "Liberation Sans", sans-serif;
}
.vbox-head { position: relative; height: 152px; padding: 10px 45px 0 16px; background: #f6f6f6; border-bottom: 2px solid #cfcfcf; }
.vbox-title { position: absolute; inset: 8px 0 auto; text-align: center; font: 26px/30px Inter, sans-serif; color: #b0b0b0; }
.vbox-tools { display: flex; gap: 25px; padding-top: 18px; }
.tool { display: flex; flex-direction: column; align-items: center; gap: 1px; min-width: 78px; font-size: 22px; line-height: 26px; }
.tool-off { margin-left: 15px; color: #777; }
.segments { display: flex; margin: 16px 0 0 auto; height: 47px; border: 2px solid #e0e0e0; border-radius: 8px; }
.segment { display: flex; align-items: center; gap: 14px; padding: 0 24px 0 17px; font: 22px/30px Inter, sans-serif; color: #b0b0b0; }
.segment-on { background: #e3e3e3; border-right: 2px solid #dcdcdc; }

.vbox-body { flex: 1; display: flex; min-height: 0; }
.machines { width: 367px; padding: 4px; background: #fff; border-right: 5px solid #c8c8c8; }
.machine { display: flex; gap: 19px; height: 89px; padding: 9px 9px 0; }
.machine div { padding-top: 2px; }
.machine b { display: block; }
.machine-on { height: 87px; width: 347px; padding: 8px 7px 0; border: 2px solid #9a9fa6; background: linear-gradient(#d6e8ff, #add4ff); }
.state { display: flex; align-items: center; gap: 9px; }
.bits { font: 17px "Liberation Sans", sans-serif; }
.version { font: 700 24px "Liberation Sans", sans-serif; fill: #6b0f0f; stroke: #fff; stroke-width: 4px; paint-order: stroke; }
.panels { flex: 1; display: flex; gap: 6px; padding: 3px 3px 0 12px; min-width: 0; }
.panel { flex: 505; border: 2px solid #9a9ba0; border-radius: 26px 26px 0 0; background: linear-gradient(#fff 60px, #eee 100px); overflow: hidden; }
.panel-wide { flex: 906; }
.panel h2 { display: flex; align-items: center; gap: 22px; height: 52px; padding-left: 21px; font-size: 26px; font-weight: 700; background: linear-gradient(#ebebeb, #d3d3d3); }
.panel dl { display: flex; padding: 10px 18px; }
.panel dt { width: 238px; }
.preview { height: 400px; margin: 22px 32px; border-radius: 10px; background: #ddd; box-shadow: 0 0 12px #000; }
.vbox-status { height: 42px; border-top: 2px solid #999; background: linear-gradient(#ebebeb, #c9c9c9); }

/* Console window behind the browser */
.console { inset: 438px 28px 286px 1400px; background: #000; box-shadow: 0 0 2px rgba(0, 0, 0, .6), 0 20px 40px rgba(0, 0, 0, .35); clip-path: inset(0 -80px -80px 1200px); }
.console-head { height: 44px; background: linear-gradient(#e8e8e8, #d0d0d0); }
.console-screen { flex: 1; }
.console-foot { display: flex; align-items: flex-end; justify-content: flex-end; height: 42px; border-top: 2px solid #777; background: linear-gradient(#e2e2e2, #b5b5b5); }

/* Browser */
.chrome {
  inset: 360px 70px 54px 536px;
  background: #fefefe;
  box-shadow: 0 0 2px rgba(0, 0, 0, .7), 0 34px 70px 8px rgba(0, 0, 0, .55);
}
.tabstrip { display: flex; height: 73px; padding: 0 9px 0 24px; background: linear-gradient(#ededed, #d6d6d6); border-bottom: 1px solid #999; }
.tabstrip .lights { width: 122px; padding-top: 26px; }
.tab { position: relative; display: flex; align-items: center; gap: 7px; width: 420px; height: 52px; margin-top: 22px; padding: 0 38px 0 34px; }
.tab-shape { position: absolute; top: 0; left: 0; }
.favicon { position: relative; }
.tab-title { position: relative; flex: 1; overflow: hidden; white-space: nowrap; font-size: 22px; -webkit-mask-image: linear-gradient(90deg, #000 82%, transparent); mask-image: linear-gradient(90deg, #000 82%, transparent); }
.tab-close { position: relative; }
.newtab { height: 34px; margin: 31px 0 0 -14px; }
.profile { height: 53px; width: 84px; margin: 12px 0 0 auto; border: 1px solid #a5a5a5; border-radius: 6px; background: #e9e9e9; font-size: 23px; }

.toolbar { display: flex; align-items: center; height: 70px; padding: 0 3px 0 20px; background: linear-gradient(#ebebeb, #dfdfdf); }
.nav-buttons { display: flex; gap: 24px; width: 220px; flex: none; }
.omnibox { flex: 1; display: flex; align-items: center; height: 55px; padding: 0 6px 0 14px; border: 2px solid #a8a8a8; border-radius: 7px; background: #fff; }
.url {
  flex: 1; min-width: 0; margin-left: 15px; padding: 0; border: 0; outline: 0;
  font: 27px/36px Inter, sans-serif;
  color: transparent;
  background: linear-gradient(90deg, #000 118px, #666 118px);
  -webkit-background-clip: text;
  background-clip: text;
}
.extensions { display: flex; margin-left: 5px; }
.extensions button { position: relative; display: grid; place-items: center; width: 64px; height: 56px; }
.badge { position: absolute; left: 31px; bottom: 0; width: 29px; height: 22px; border-radius: 3px; font: 700 20px/22px "Liberation Sans", sans-serif; color: #fff; }
.badge-red { background: #c0544b; }
.badge-blue { background: #6990b3; }
.letter-d { font: 700 22px "Liberation Serif", serif; fill: #fff; text-anchor: middle; }
.letter-r { font: 30px "Liberation Serif", serif; fill: #fff; text-anchor: middle; }
.abp { font: 700 16px "Liberation Sans", sans-serif; fill: #fff; text-anchor: middle; }
.cal-day { font: 20px "Liberation Sans", sans-serif; fill: #fff; text-anchor: middle; }

.bookmarks { display: flex; align-items: center; gap: 33px; height: 47px; padding: 0 22px 9px 14px; background: linear-gradient(#dfdfdf, #d2d2d2); border-bottom: 1px solid #777; font-size: 22px; white-space: nowrap; }
.bookmarks a { display: flex; align-items: center; gap: 12px; }
.icon-links { display: flex; gap: 22px; margin-right: -9px; }
.bookmarks-end { display: flex; align-items: center; gap: 22px; margin-left: auto; }
.more { color: #555; font-size: 26px; }

/* Falkonry application */
.app { flex: 1; display: flex; min-height: 0; font-family: Roboto, sans-serif; }
.sidebar { position: relative; z-index: 2; width: 520px; flex: none; background: #474747; color: #e4e4e4; }
.brand { display: flex; align-items: center; gap: 30px; height: 120px; padding-left: 24px; font-size: 48px; color: #fff; }
.account { display: flex; justify-content: space-between; height: 284px; margin-right: 2px; padding: 0 47px 0 44px; background: #5f5d5e; font-size: 26px; line-height: 40px; color: #9b9b9b; }
.account a { display: block; }
.who { padding-top: 26px; font-size: 32px; line-height: 42px; color: #fff; }
.links { display: flex; gap: 28px; }
.account .personal { margin-top: 24px; font-size: 32px; line-height: 45px; color: #42a5f5; }
.avatar { fill: #bdbdbd; }
.item { display: flex; align-items: center; gap: 42px; height: 118px; padding: 0 50px 0 28px; font-size: 32px; fill: #bdbdbd; }
.item-on { background: #3f3f3f; }
.chev { margin: 0 0 12px auto; }
.sub { display: flex; align-items: center; height: 78px; padding-left: 130px; font-size: 26px; }
.collapse { position: absolute; right: -30px; bottom: 20px; display: grid; place-items: center; width: 60px; height: 60px; border-radius: 50%; background: #fff; box-shadow: 0 2px 6px rgba(0, 0, 0, .4); }

.main { position: relative; flex: 1; display: flex; flex-direction: column; min-width: 0; background: #fff; }
.app-bar { position: relative; z-index: 1; display: flex; align-items: center; justify-content: flex-end; height: 120px; padding-right: 34px; background: #fff; box-shadow: 0 2px 10px rgba(0, 0, 0, .5); }
.content { flex: 1; display: flex; background: #fefefe; }
.pipelines { flex: 1; min-width: 0; }
.heading { padding-top: 45px; text-align: center; font-size: 46px; line-height: 50px; color: #424242; }
table { width: 100%; margin-top: 24px; border-collapse: collapse; table-layout: fixed; }
.c-status { width: 194px; }
.c-name { width: 216px; }
.c-things { width: 200px; }
.c-assess { width: 330px; }
th { height: 74px; padding: 0 0 2px; background: #fafafa; border-bottom: 2px solid #ededed; font-size: 22px; font-weight: 500; text-align: left; color: #666; }
th:first-child { padding-left: 80px; }
th svg { display: inline-block; margin-left: 3px; }
td { height: 84px; padding: 0; }
.add { display: flex; align-items: center; gap: 13px; padding-left: 5px; font-size: 30px; color: #00bcd4; }

.usage { width: 274px; flex: none; background: #fefefe; text-align: center; }
.usage .heading { height: 170px; padding-left: 40px; padding-right: 40px; }
.card { height: 300px; margin-bottom: 40px; border-radius: 4px; background: #fefefe; box-shadow: 0 3px 4px -1px rgba(0, 0, 0, .14), 0 0 3px rgba(0, 0, 0, .03); }
.card h3 { padding-top: 26px; font-size: 30px; line-height: 40px; font-weight: 500; color: #212121; }
.count { margin-top: 82px; font-size: 66px; line-height: 76px; font-weight: 700; color: #424242; }
.card-gauge { display: flex; flex-direction: column; align-items: center; }
.card h4 { padding-top: 58px; margin-bottom: 25px; font: 700 21px/24px "Liberation Sans", sans-serif; }
.value { font: 700 31px "Liberation Sans", sans-serif; text-anchor: middle; }
.limit { font: 13px "Liberation Sans", sans-serif; text-anchor: middle; }
.helper { position: absolute; z-index: 2; right: 40px; bottom: 40px; display: grid; place-items: center; width: 100px; height: 100px; border: 2px solid #000; border-radius: 50%; background: #323232; box-shadow: 0 6px 24px rgba(0, 0, 0, .35); }
```
